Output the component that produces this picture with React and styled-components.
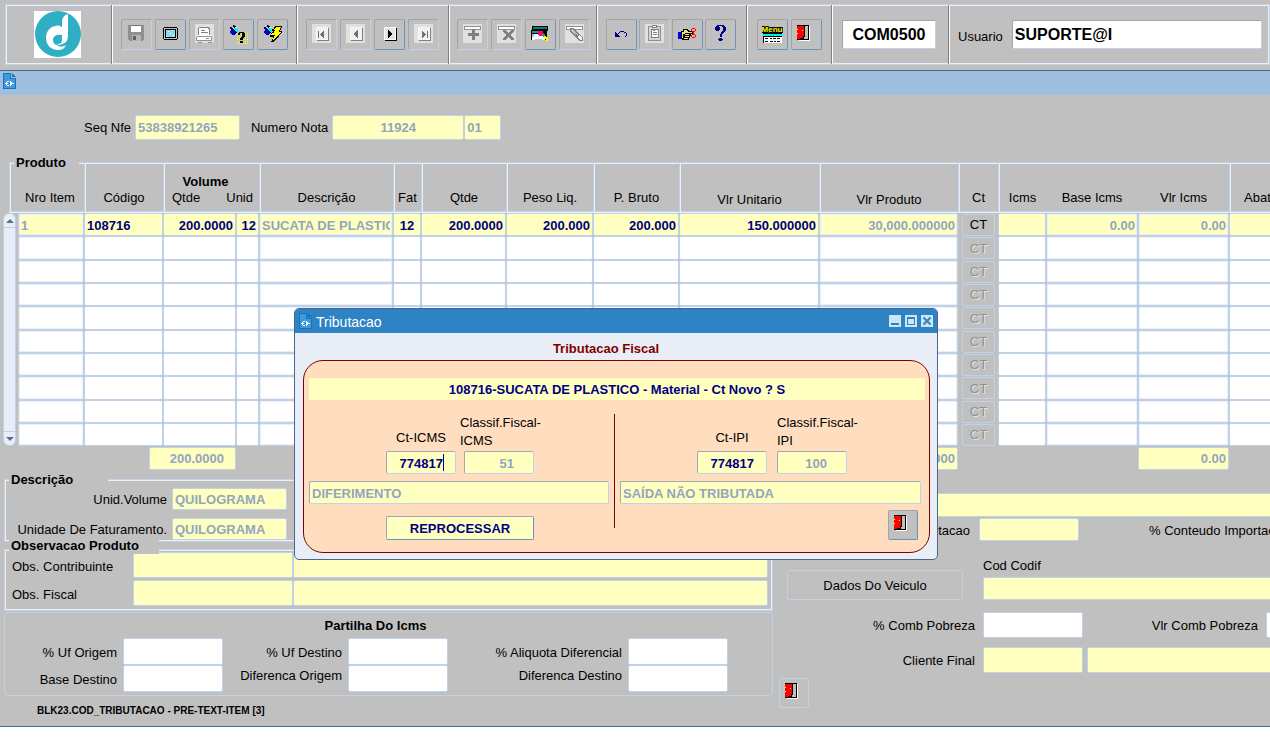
import { useState } from "react";
import styled, { createGlobalStyle, css } from "styled-components";

const GlobalStyle = createGlobalStyle`
  * {
    box-sizing: border-box;
  }
  body {
    margin: 0;
    background: #fff;
    overflow: hidden;
  }
  body, input, button {
    font-family: "Liberation Sans", Arial, sans-serif;
    font-size: 13px;
    line-height: 16px;
    color: #000;
  }
`;

/* ---------- icons ---------- */

const Icon = ({ children }) => (
  <svg width="21" height="21" viewBox="0 0 21 21" aria-hidden="true">
    {children}
  </svg>
);

const Faded = () => <rect x="1" y="0" width="19" height="19" fill="#e0e0e0" />;

const SaveIcon = () => (
  <Icon>
    <path d="M2 1h16v15h-1v1H4l-2-2z" fill="#909090" />
    <rect x="5" y="1" width="10" height="7" fill="#fff" />
    <rect x="5" y="1" width="10" height="1" fill="#707070" />
    <rect x="6" y="11" width="9" height="6" fill="#b4b4b4" />
    <rect x="7" y="12" width="3" height="4" fill="#606060" />
  </Icon>
);

const ScreenIcon = () => (
  <Icon>
    <path d="M4 3h13v1h1v11h-1v1H4v-1H3V4h1z" fill="#000" />
    <rect x="4" y="4" width="13" height="11" fill="#c0c0c0" />
    <rect x="5" y="5" width="11" height="9" fill="#000" />
    <rect x="6" y="6" width="9" height="7" fill="#70e4f4" />
    <path d="M6 6h1v1H6zM10 6h1v1h-1zM8 8h1v1H8zM12 8h1v1h-1zM6 10h1v1H6zM10 10h1v1h-1zM14 10h1v1h-1zM8 12h1v1H8zM12 12h1v1h-1z" fill="#f0b8b8" />
    <path d="M8 7h1v1H8zM12 6h1v1h-1zM10 9h1v1h-1zM6 12h1v1H6zM13 11h1v1h-1z" fill="#fff" />
  </Icon>
);

const PrinterIcon = () => (
  <Icon>
    <Faded />
    <path d="M5 3h9l2 2v7H5z" fill="#fff" />
    <path d="M4 4h1v7H4zM14 3h1v1h1v7h-1V5h-1zM5 3h9v1H5zM7 6h4v1H7zM7 8h7v1H7z" fill="#808080" />
    <path d="M3 11h15v5H3z" fill="#fff" />
    <path d="M3 12h15v1H3zM2 13h1v4H2zM17 12h1v5h-1zM3 16h15v1H3zM12 14h3v1h-3zM4 18h4v1H4zM14 18h4v1h-4z" fill="#909090" />
  </Icon>
);

const Torch = () => (
  <>
    <path d="M5 1h2v1h1v1h1v1H8v1H7V4H6V3H5z" fill="#000" />
    <rect x="6" y="1" width="1" height="1" fill="#e02020" />
    <path d="M2 3h2v1h1v1h2v1h3v2H9v1H8v1H7v1H4v-1H3V9H2V7h1V5H2z" fill="#000080" />
    <path d="M6 4h3v1h1v3H8V7H7V6H6z" fill="#00f0ff" />
    <path d="M3 7h3v1h1v2H4V9H3z" fill="#0000f0" />
    <rect x="7" y="3" width="2" height="1" fill="#fff" />
  </>
);

const Dots = () => {
  const dots = [];
  for (let y = 0; y < 6; y++) {
    for (let x = 0; x < 6; x++) {
      dots.push(<rect key={`${x}-${y}`} x={9 + x * 2} y={9 + y * 2} width="1" height="1" fill="#ffff00" />);
    }
  }
  return dots;
};

const EnterQueryIcon = () => (
  <Icon>
    <Torch />
    <Dots />
    <path d="M11 8h5v1h1v4h-1v1h-1v2h-3v-2h1v-1h1V9h-2v2h-2V9h1zM12 17h3v2h-3z" fill="#000" />
  </Icon>
);

const RunQueryIcon = () => (
  <Icon>
    <Torch />
    <path d="M13 2h7v2h-1v2h-1v1h2v2h-1v1h-1v1h-1v2h-1v1h-1v1h-1v1h-1v1h-1v1H9v-1h1v-2h1v-2H8v-2h1V9h1V8h1V7h-1V5h2V3h1z" fill="#000" />
    <path d="M14 3h5v1h-1v2h-1v2h2v1h-1v1h-1v1h-1v1h-1v1h-1v1h-1v1h-1v1h-1v-2h1v-2h1v-1H9v-1h1V9h2V7h1V6h-1V5h1V4h1z" fill="#ffff00" />
  </Icon>
);

const NavIcon = ({ shape, off }) => (
  <Icon>
    {off && <Faded />}
    <rect x="6" y="4" width="12" height="13" fill={off ? "#808080" : "#000"} />
    <rect x="5" y="3" width="12" height="13" fill={off ? "#f6f6f6" : "#fff"} />
    <rect x="6" y="4" width="10" height="11" fill={off ? "#f0f0f0" : "#e4e4e4"} />
    <path d={shape} fill={off ? "#707070" : "#000"} />
  </Icon>
);

const first = "M7 7h1v7H7zM12 7h1v7h-1v-1h-1v-1h-1v-1H9v-1h1V9h1V8h1z";
const prev = "M12 6h1v8h-1v-1h-1v-1h-1v-1H9V9h1V8h1V7h1z";
const next = "M9 6h1v1h1v1h1v1h1v2h-1v1h-1v1h-1v1H9z";
const last = "M9 7h1v1h1v1h1v1h1v1h-1v1h-1v1h-1v1H9zM14 7h1v7h-1z";

const BarTop = () => (
  <>
    <Faded />
    <rect x="2" y="2" width="17" height="4" fill="#909090" />
    <rect x="3" y="3" width="15" height="2" fill="#fff" />
  </>
);

const InsertIcon = () => (
  <Icon>
    <BarTop />
    <path d="M10 5h3v4h4v3h-4v4h-3v-4H6V9h4z" fill="#808080" />
  </Icon>
);

const DeleteIcon = () => (
  <Icon>
    <BarTop />
    <path
      d="M7 6h3v1h1v1h1v1h1V8h1V7h1V6h3v2h-1v1h-1v1h-1v2h1v1h1v1h1v2h-3v-1h-1v-1h-1v-1h-1v1h-1v1h-1v1H7v-2h1v-1h1v-1h1v-2H9V9H8V8H7z"
      fill="#808080"
    />
  </Icon>
);

const FindIcon = () => (
  <Icon>
    <rect x="2" y="2" width="16" height="5" fill="#000" />
    <rect x="3" y="3" width="14" height="2" fill="#008080" />
    <rect x="1" y="6" width="16" height="10" fill="#000" />
    <rect x="2" y="7" width="9" height="2" fill="#00a0a0" />
    <rect x="2" y="10" width="13" height="6" fill="#fff" />
    <path d="M2 10h3v1H4v2H2zM5 15h7v1H5z" fill="#c0c0c0" />
    <path d="M8 7h5v2h1v2h-2v1H9v-1H8z" fill="#ff0080" />
    <path d="M12 10h3v2h1v1h-3v-1h-1z" fill="#00c020" />
    <path d="M14 12h2v1h1v1h1v3h-2v-2h-2z" fill="#ffff00" />
    <rect x="8" y="6" width="2" height="1" fill="#800000" />
  </Icon>
);

const ClearIcon = () => (
  <Icon>
    <BarTop />
    <path d="M6 4h4v1h1v1h1v1h1v1h1v1h1v1h1v1h1v1h1v1h1v4h-4v-1h-1v-1h-1v-1h-1v-1h-1v-1h-1v-1H9v-1H8V9H7V8H6z" fill="#808080" />
    <path d="M8 5h1v1h1v1h1v1h1v1h1v1h1v1h-1v-1h-1V9h-1v1h1v1h-1v-1h-1V9H9V8H8V7H7V6h1z" fill="#c8c8c8" />
    <path d="M15 11h1v1h1v1h1v3h-2v-1h-1v-1h-1v-2h1z" fill="#f4f4f4" />
  </Icon>
);

const UndoIcon = () => (
  <Icon>
    <path d="M4 8h1v1h1v1h1V9h1V8h1V7h4v1h2v1h1v3h-1v1h-1v-1h1V9h-2V8H9v1H8v1H7v1h1v1h1v1H4z" fill="#000080" />
  </Icon>
);

const ClipboardIcon = () => (
  <Icon>
    <Faded />
    <path d="M4 2h13v15H4z" fill="#909090" />
    <path d="M5 3h11v13H5z" fill="#d4d4d4" />
    <path d="M7 5h8v9H7z" fill="#808080" />
    <path d="M8 6h6v7H8z" fill="#fff" />
    <path d="M8 1h5v3H8zM9 8h4v1H9zM9 10h4v1H9zM9 6h2v1H9z" fill="#808080" />
    <rect x="9" y="2" width="3" height="1" fill="#fff" />
  </Icon>
);

const HandIcon = () => (
  <Icon>
    <rect x="1" y="8" width="3" height="7" fill="#0000f0" />
    <path d="M4 7h2V5h5v1h1v1h4v3h-2v2h-1v2h-1v2H5v-1H4z" fill="#000" />
    <path d="M5 8h2V6h3v1h1v1h4v1H8v1H6v4H5zM8 10h4v1H8zM8 12h4v1H8zM7 14h4v1H7z" fill="#f0e070" />
    <path d="M15 4h3v1h-3zM14 5h1v2h-1zM18 5h1v2h-1zM15 7h3v1h-3zM16 8h1v2h-1zM15 10h3v1h-3zM14 11h1v2h-1zM18 11h1v2h-1zM15 13h3v1h-3z" fill="#ff0000" />
  </Icon>
);

const HelpIcon = () => (
  <Icon>
    <path
      d="M6 2h1V1h7v1h1v1h1v4h-1v1h-1v1h-1v1h-1v3h-2v-3h1V8h1V7h1V3h-1V2H9v1h1v3H9v1H6V6H5V3h1zM9 14h3v1h1v1h-1v1H9v-1H8v-1h1z"
      fill="#000080"
    />
  </Icon>
);

const MenuIcon = () => (
  <Icon>
    <rect x="1" y="9" width="19" height="10" fill="#000" />
    <rect x="1" y="10" width="19" height="2" fill="#00f0f0" />
    <rect x="2" y="13" width="18" height="6" fill="#fff" />
    <path d="M3 14h3v1H3zM8 14h2v1H8zM11 14h3v1h-3zM15 14h3v1h-3zM3 17h3v1H3zM8 17h3v1H8zM12 17h2v1h-2zM15 17h3v1h-3z" fill="#000" />
    <text x="10" y="8" textAnchor="middle" fontFamily="Liberation Sans, sans-serif" fontWeight="bold" fontSize="8" fill="#ffff00" stroke="#000" strokeWidth="2" paintOrder="stroke">
      Menu
    </text>
  </Icon>
);

const DoorIcon = () => (
  <Icon>
    <rect x="3" y="2" width="11" height="15" fill="#fff" />
    <rect x="1" y="1" width="12" height="15" fill="#000" />
    <rect x="8" y="2" width="4" height="13" fill="#c0c0c0" />
    <path d="M1 2h7v10H7v2H4v1H1z" fill="#ff0000" />
    <path d="M8 2h1v11H8zM7 12h1v2H7zM4 14h3v1H4z" fill="#000" />
    <path d="M1 5h1v1H1zM1 9h1v1H1zM6 6h1v1H6z" fill="#ffff00" />
  </Icon>
);

const PageIcon = () => (
  <svg width="13" height="16" viewBox="0 0 13 16" aria-hidden="true">
    <path d="M0 0h8v5h5v11H0z" fill="#1c71ae" />
    <path d="M1 1h6v5h5v9H1z" fill="#3c9ade" />
    <path d="M9 0l4 4H9z" fill="#1c71ae" />
    <path d="M4 8h2v1H4zM3 9h1v1H3zM2 10h3v1H2zM3 11h1v1H3zM4 12h2v1H4zM7 8h1v1h1v1h2v1H9v1H8v1H7z" fill="#fff" />
  </svg>
);

const LogoMark = () => (
  <svg width="47" height="47" viewBox="0 0 47 47" role="img" aria-label="Logo">
    <rect width="47" height="47" fill="#fff" />
    <circle cx="24" cy="23" r="23" fill="#2fafc4" />
    <path
      d="M34 3c-4 1-6 4-6 8v5c-2-1-4-2-6-1-6 0-10 6-10 12 0 7 5 12 12 12 4 0 7-2 8-5-3 2-7 2-9 0 4 0 7-1 9-3 2-3 2-5 2-8z"
      fill="#fff"
    />
    <path d="M28 24c-5-1-9 1-9 5 0 3 2 5 5 5-2-2-2-5 0-6 1-1 3 0 3 1 1-1 1-3 1-5z" fill="#2fafc4" />
    <circle cx="24" cy="29" r="4" fill="#2fafc4" />
  </svg>
);

/* ---------- data ---------- */

const toolGroups = [
  {
    width: 185,
    pad: 9,
    gap: 3,
    tools: [
      { name: "Salvar", icon: <SaveIcon />, off: true },
      { name: "Tela", icon: <ScreenIcon /> },
      { name: "Imprimir", icon: <PrinterIcon />, off: true },
      { name: "Entrar consulta", icon: <EnterQueryIcon /> },
      { name: "Executar consulta", icon: <RunQueryIcon /> },
    ],
  },
  {
    width: 152,
    pad: 9,
    gap: 3,
    tools: [
      { name: "Primeiro", icon: <NavIcon shape={first} off />, off: true },
      { name: "Anterior", icon: <NavIcon shape={prev} off />, off: true },
      { name: "Proximo", icon: <NavIcon shape={next} /> },
      { name: "Ultimo", icon: <NavIcon shape={last} off />, off: true },
    ],
  },
  {
    width: 148,
    pad: 8,
    gap: 3,
    tools: [
      { name: "Inserir", icon: <InsertIcon />, off: true },
      { name: "Excluir", icon: <DeleteIcon />, off: true },
      { name: "Localizar", icon: <FindIcon /> },
      { name: "Limpar", icon: <ClearIcon />, off: true },
    ],
  },
  {
    width: 150,
    pad: 9,
    gap: 2,
    tools: [
      { name: "Desfazer", icon: <UndoIcon /> },
      { name: "Colar", icon: <ClipboardIcon />, off: true },
      { name: "Editar", icon: <HandIcon /> },
      { name: "Ajuda", icon: <HelpIcon /> },
    ],
  },
  {
    width: 85,
    pad: 10,
    gap: 3,
    tools: [
      { name: "Menu", icon: <MenuIcon /> },
      { name: "Sair", icon: <DoorIcon /> },
    ],
  },
];

const columns = [
  { name: "Nro Item", width: 66, value: "1", dim: true },
  { name: "Código", width: 79, value: "108716" },
  { name: "Volume Qtde", width: 73, value: "200.0000", align: "right" },
  { name: "Unid", width: 23, value: "12", align: "right" },
  { name: "Descrição", width: 134, value: "SUCATA DE PLASTICO", dim: true },
  { name: "Fat", width: 28, value: "12", align: "center" },
  { name: "Qtde", width: 85, value: "200.0000", align: "right" },
  { name: "Peso Liq.", width: 87, value: "200.000", align: "right" },
  { name: "P. Bruto", width: 86, value: "200.000", align: "right" },
  { name: "Vlr Unitario", width: 140, value: "150.000000", align: "right", low: true },
  { name: "Vlr Produto", width: 139, value: "30,000.000000", align: "right", dim: true, low: true },
  { name: "Ct", width: 40, button: true },
  { name: "Icms", width: 48, value: "" },
  { name: "Base Icms", width: 92, value: "0.00", align: "right", dim: true, plain: true },
  { name: "Vlr Icms", width: 91, value: "0.00", align: "right", dim: true, plain: true },
  { name: "Abat", value: "", left: true },
];

const rows = Array.from({ length: 10 }, (_, i) => i);

/* ---------- components ---------- */

const Toolbar = () => (
  <Bar>
    <BarFrame>
      <LogoCell>
        <LogoMark />
      </LogoCell>
      {toolGroups.map((group) => (
        <ToolGroup key={group.tools[0].name} $width={group.width} $pad={group.pad} $gap={group.gap}>
          {group.tools.map((tool) => (
            <ToolButton key={tool.name} type="button" aria-label={tool.name} disabled={tool.off}>
              {tool.icon}
            </ToolButton>
          ))}
        </ToolGroup>
      ))}
      <CodeCell>
        <BarInput aria-label="Programa" defaultValue="COM0500" $align="center" />
      </CodeCell>
      <UserCell>
        <UserLabel htmlFor="usuario">Usuario</UserLabel>
        <BarInput id="usuario" defaultValue="SUPORTE@I" />
      </UserCell>
    </BarFrame>
  </Bar>
);

const ItemsTable = () => (
  <TableWrap>
    <Table>
      <colgroup>
        <Col $width={15} />
        {columns.map((c) => (
          <Col key={c.name} $width={c.width} />
        ))}
      </colgroup>
      <thead>
        <tr>
          <CornerHead colSpan={2}>
            <CornerFrame>
              <Legend $gap={13}>Produto</Legend>
              Nro Item
            </CornerFrame>
          </CornerHead>
          <Head>Código</Head>
          <Head colSpan={2}>
            <VolumeTitle>Volume</VolumeTitle>
            <VolumeParts>
              <span>Qtde</span>
              <span>Unid</span>
            </VolumeParts>
          </Head>
          {columns.slice(4).map((c) => (
            <Head key={c.name} $low={c.low} $plain={c.plain} $left={c.left}>
              {c.name}
            </Head>
          ))}
        </tr>
      </thead>
      <tbody>
        {rows.map((row) => (
          <tr key={row}>
            {row === 0 && (
              <ScrollCell rowSpan={10}>
                <Scroll>
                  <ScrollButton type="button" aria-label="Subir">
                    <svg width="8" height="4" viewBox="0 0 8 4">
                      <path d="M0 4l4-4 4 4z" fill="#60708a" />
                    </svg>
                  </ScrollButton>
                  <ScrollButton type="button" aria-label="Descer">
                    <svg width="8" height="4" viewBox="0 0 8 4">
                      <path d="M0 0h8L4 4z" fill="#60708a" />
                    </svg>
                  </ScrollButton>
                </Scroll>
              </ScrollCell>
            )}
            {columns.map((c) =>
              c.button ? (
                <CtCell key={c.name}>
                  <CtButton type="button" disabled={row > 0}>
                    CT
                  </CtButton>
                </CtCell>
              ) : (
                <Cell key={c.name}>
                  <CellInput
                    aria-label={`${c.name} ${row + 1}`}
                    defaultValue={row === 0 ? c.value : ""}
                    $fill={row === 0 ? "#ffffc0" : "#fff"}
                    $align={c.align}
                    $dim={c.dim}
                  />
                </Cell>
              )
            )}
          </tr>
        ))}
      </tbody>
      <tfoot>
        <tr>
          <TotalCell colSpan={4}>
            <Input aria-label="Total volume" defaultValue="200.0000" $width={87} $height={23} $align="right" $pad={11} $dim readOnly />
          </TotalCell>
          <TotalCell colSpan={8}>
            <Input aria-label="Total produto" defaultValue="30,000.000000" $width={139} $height={23} $align="right" $dim readOnly />
          </TotalCell>
          <TotalCell colSpan={3} />
          <TotalCell>
            <Input aria-label="Total Icms" defaultValue="0.00" $width={91} $height={23} $align="right" $dim readOnly />
          </TotalCell>
          <TotalCell />
        </tr>
      </tfoot>
    </Table>
  </TableWrap>
);

const Details = () => (
  <LeftColumn>
    <Panel $top={8} $bottom={1} $gap={8}>
      <Legend $gap={35}>Descrição</Legend>
      <Line $gap={5}>
        <Label htmlFor="unidvol" $width={162}>
          Unid.Volume
        </Label>
        <Input id="unidvol" defaultValue="QUILOGRAMA" $width={115} $height={22} $dim readOnly />
      </Line>
      <Line $gap={5}>
        <Label htmlFor="unidfat" $width={162}>
          Unidade De Faturamento.
        </Label>
        <Input id="unidfat" defaultValue="QUILOGRAMA" $width={115} $height={22} $dim readOnly />
      </Line>
    </Panel>
    <ObsPanel $top={2} $bottom={4} $gap={2}>
      <Legend $gap={20} $high>
        Observacao Produto
      </Legend>
      <Line>
        <ObsLabel htmlFor="obscontr">Obs. Contribuinte</ObsLabel>
        <Input id="obscontr" $width={160} $height={26} />
        <Input aria-label="Texto contribuinte" $height={26} />
      </Line>
      <Line>
        <ObsLabel htmlFor="obsfiscal">Obs. Fiscal</ObsLabel>
        <Input id="obsfiscal" $width={160} $height={26} />
        <Input aria-label="Texto fiscal" $height={26} />
      </Line>
    </ObsPanel>
    <RoundPanel>
      <PanelTitle>Partilha Do Icms</PanelTitle>
      <ShareGrid>
        <Label htmlFor="uforigem">% Uf Origem</Label>
        <Input id="uforigem" $width={100} $height={27} $fill="#fff" />
        <Label htmlFor="ufdestino">% Uf Destino</Label>
        <Input id="ufdestino" $width={100} $height={27} $fill="#fff" />
        <Label htmlFor="aliquota">% Aliquota Diferencial</Label>
        <Input id="aliquota" $width={100} $height={27} $fill="#fff" />
        <Label htmlFor="basedest">Base Destino</Label>
        <Input id="basedest" $width={100} $height={27} $fill="#fff" />
        <RaisedLabel htmlFor="diforigem">Diferenca Origem</RaisedLabel>
        <Input id="diforigem" $width={100} $height={27} $fill="#fff" />
        <RaisedLabel htmlFor="difdestino">Diferenca Destino</RaisedLabel>
        <Input id="difdestino" $width={100} $height={27} $fill="#fff" />
      </ShareGrid>
    </RoundPanel>
    <Status>BLK23.COD_TRIBUTACAO - PRE-TEXT-ITEM [3]</Status>
  </LeftColumn>
);

const SideFields = () => (
  <RightColumn>
    <Input aria-label="Natureza" $height={24} />
    <Line $gap={9} $after={16}>
      <Label htmlFor="importacao" $width={191}>
        % Importacao
      </Label>
      <Input id="importacao" $width={100} $height={23} />
      <ContentLabel>% Conteudo Importac</ContentLabel>
    </Line>
    <Line $gap={8} $after={12}>
      <VehicleCell>
        <VehicleButton type="button">Dados Do Veiculo</VehicleButton>
      </VehicleCell>
      <CodifField>
        <label htmlFor="codif">Cod Codif</label>
        <Input id="codif" $height={23} />
      </CodifField>
    </Line>
    <Line $gap={8} $after={9}>
      <Label htmlFor="combpobreza" $width={196}>
        % Comb Pobreza
      </Label>
      <Input id="combpobreza" $width={100} $height={26} $fill="#fff" />
      <Label htmlFor="vlrcomb" $width={167}>
        Vlr Comb Pobreza
      </Label>
      <Input id="vlrcomb" $height={26} $fill="#fff" />
    </Line>
    <Line $gap={8} $after={5}>
      <Label htmlFor="cliente" $width={196}>
        Cliente Final
      </Label>
      <ClientFields>
        <Input id="cliente" $width={100} $height={26} />
        <Input aria-label="Nome cliente" $height={26} />
      </ClientFields>
    </Line>
    <SquareButton type="button" aria-label="Sair" $flat>
      <DoorIcon />
    </SquareButton>
  </RightColumn>
);

const TaxDialog = ({ onClose }) => (
  <Dialog role="dialog" aria-label="Tributacao">
    <DialogBar>
      <PageIcon />
      <DialogName>Tributacao</DialogName>
      <WinButton type="button" aria-label="Minimizar">
        <svg width="12" height="12" viewBox="0 0 12 12">
          <path d="M2 8h8v2H2z" fill="#2d83c4" />
        </svg>
      </WinButton>
      <WinButton type="button" aria-label="Maximizar">
        <svg width="12" height="12" viewBox="0 0 12 12">
          <path d="M2 2h8v8H2zM3 4v5h6V4z" fillRule="evenodd" fill="#2d83c4" />
        </svg>
      </WinButton>
      <WinButton type="button" aria-label="Fechar" onClick={onClose}>
        <svg width="12" height="12" viewBox="0 0 12 12">
          <path d="M2.500 2.500l7 7M9.500 2.500l-7 7" stroke="#2d83c4" strokeWidth="2" />
        </svg>
      </WinButton>
    </DialogBar>
    <DialogTitle>Tributacao Fiscal</DialogTitle>
    <Card>
      <Band>108716-SUCATA DE PLASTICO - Material - Ct Novo ? S</Band>
      <Halves>
        <Half>
          <TaxFields $gap={4}>
            <TaxField $width={70} $center>
              <label htmlFor="cticms">Ct-ICMS</label>
              <TaxInput id="cticms" defaultValue="774817" $width={70} $align="right" $pad={12} />
              <Caret />
            </TaxField>
            <TaxField $width={74}>
              <label htmlFor="classicms">
                Classif.Fiscal-
                <br />
                ICMS
              </label>
              <TaxInput id="classicms" defaultValue="51" $width={70} $align="right" $pad={19} $dim readOnly />
            </TaxField>
          </TaxFields>
          <TaxInput aria-label="Descricao ICMS" defaultValue="DIFERIMENTO" $dim readOnly />
          <Reprocess type="button">REPROCESSAR</Reprocess>
        </Half>
        <Divider />
        <Half>
          <TaxFields $gap={10}>
            <TaxField $width={70} $center>
              <label htmlFor="ctipi">Ct-IPI</label>
              <TaxInput id="ctipi" defaultValue="774817" $width={70} $align="right" $pad={12} />
            </TaxField>
            <TaxField $width={70}>
              <label htmlFor="classipi">
                Classif.Fiscal-
                <br />
                IPI
              </label>
              <TaxInput id="classipi" defaultValue="100" $width={70} $align="right" $pad={19} $dim readOnly />
            </TaxField>
          </TaxFields>
          <TaxInput aria-label="Descricao IPI" defaultValue="SAÍDA NÃO TRIBUTADA" $dim readOnly />
          <ExitLine>
            <SquareButton type="button" aria-label="Sair" onClick={onClose}>
              <DoorIcon />
            </SquareButton>
          </ExitLine>
        </Half>
      </Halves>
    </Card>
  </Dialog>
);

const App = () => {
  const [open, setOpen] = useState(true);

  return (
    <>
      <GlobalStyle />
      <Toolbar />
      <Window>
        <WindowBar>
          <PageIcon />
        </WindowBar>
        <Body>
          <NoteLine>
            <NoteField>
              <label htmlFor="seqnfe">Seq Nfe</label>
              <Input id="seqnfe" defaultValue="53838921265" $width={105} $height={25} $dim readOnly />
            </NoteField>
            <NoteField>
              <label htmlFor="nota">Numero Nota</label>
              <div>
                <Input id="nota" defaultValue="11924" $width={132} $height={25} $align="center" $dim readOnly />
                <Input aria-label="Serie" defaultValue="01" $width={37} $height={25} $dim readOnly />
              </div>
            </NoteField>
          </NoteLine>
          <ItemsTable />
          <Lower>
            <Details />
            <SideFields />
          </Lower>
        </Body>
        {open && <TaxDialog onClose={() => setOpen(false)} />}
      </Window>
    </>
  );
};
export default App;

/* ---------- styles ---------- */

const edge = "#bfd2e8";
const shine = "#e9f0f8";

const frame = css`
  border: 1px solid ${edge};
  box-shadow: inset 1px 1px 0 ${shine}, inset -1px -1px 0 ${shine};
`;

const Bar = styled.header`
  background: #c0c0c0;
  padding: 4px 0 5px 5px;
`;
const BarFrame = styled.div`
  ${frame}
  display: flex;
  height: 61px;
`;
const BarCell = styled.div`
  flex: none;
  display: flex;
  align-items: center;
  border-right: 1px solid #808080;
  box-shadow: 1px 0 0 #fff;
`;
const LogoCell = styled(BarCell)`
  width: 106px;
  padding-left: 28px;
`;
const ToolGroup = styled(BarCell)`
  gap: ${(p) => p.$gap}px;
  width: ${(p) => p.$width}px;
  padding-left: ${(p) => p.$pad}px;
`;
const ToolButton = styled.button`
  flex: none;
  display: flex;
  align-items: center;
  justify-content: center;
  width: 31px;
  height: 31px;
  padding: 0;
  background: #c0c0c0;
  border: 1px solid;
  border-color: #a4a4a4 #6f93b8 #6f93b8 #a4a4a4;
  border-radius: 2px;

  &:disabled {
    border-color: #a4a4a4 ${edge} ${edge} #a4a4a4;
  }
`;
const CodeCell = styled(BarCell)`
  width: 117px;
  padding: 0 12px 0 10px;
`;
const UserCell = styled.div`
  flex: 1;
  display: flex;
  align-items: center;
  gap: 9px;
  padding: 0 7px 0 9px;
`;
const UserLabel = styled.label`
  padding-top: 4px;
`;
const BarInput = styled.input`
  flex: 1;
  min-width: 0;
  height: 29px;
  padding: 0 2px;
  border: 1px solid;
  border-color: #a4a4a4 ${edge} ${edge} #a4a4a4;
  border-radius: 2px;
  background: #fff;
  font-size: 16px;
  font-weight: bold;
  text-align: ${(p) => p.$align || "left"};
  outline: none;
`;

const Window = styled.main`
  position: relative;
  background: #c0c0c0;
  border-top: 1px solid #4a6592;
  border-bottom: 1px solid #4a6592;
  overflow: hidden;
`;
const WindowBar = styled.div`
  display: flex;
  align-items: flex-start;
  height: 24px;
  padding: 2px 3px;
  background: #9ebfdf;
`;
const Body = styled.div`
  padding: 20px 0 7px;
`;

const Input = styled.input`
  flex: ${(p) => (p.$width ? "none" : "1 1 0")};
  width: ${(p) => (p.$width ? `${p.$width}px` : "100%")};
  min-width: 0;
  height: ${(p) => p.$height}px;
  padding: 0 ${(p) => p.$pad || 2}px 0 2px;
  border: 1px solid ${edge};
  border-radius: 2px;
  background: ${(p) => p.$fill || "#ffffc0"};
  color: ${(p) => (p.$dim ? "#92a6be" : "#000080")};
  font-weight: bold;
  text-align: ${(p) => p.$align || "left"};
  outline: none;
`;
const CellInput = styled(Input)`
  display: block;
  height: 23px;
  padding-top: 2px;
  box-shadow: ${(p) => (p.$dim ? `inset 0 0 0 1px ${shine}` : "none")};
`;

const NoteLine = styled.div`
  display: flex;
  gap: 11px;
  padding-left: 84px;
  margin-bottom: 22px;
`;
const NoteField = styled.div`
  display: flex;
  align-items: center;
  gap: 4px;

  div {
    display: flex;
  }
`;

const Legend = styled.h2`
  position: absolute;
  top: ${(p) => (p.$high ? -12 : -8)}px;
  left: 4px;
  margin: 0;
  padding: 0 ${(p) => p.$gap}px 0 2px;
  background: #c0c0c0;
  font-size: 13px;
  line-height: 16px;
  font-weight: bold;
`;

const TableWrap = styled.div`
  margin: 0 -8px 0 3px;
`;
const Table = styled.table`
  width: 100%;
  min-width: 1260px;
  table-layout: fixed;
  border-spacing: 0;

  tbody tr:nth-child(3n + 2) input {
    height: 24px;
  }
`;
const Col = styled.col`
  width: ${(p) => (p.$width ? `${p.$width}px` : "auto")};
`;
const Head = styled.th`
  height: 51px;
  padding: 0 0 ${(p) => (p.$low ? 4 : 6)}px ${(p) => (p.$left ? 14 : 0)}px;
  border-top: 1px solid ${edge};
  border-bottom: 1px solid ${shine};
  border-left: ${(p) => (p.$plain ? "none" : `1px solid ${edge}`)};
  box-shadow: inset ${(p) => (p.$plain ? 0 : 1)}px 1px 0 ${shine}, inset 0 -1px 0 ${edge};
  font-weight: normal;
  text-align: ${(p) => (p.$left ? "left" : "center")};
  vertical-align: bottom;
  white-space: nowrap;
`;
const CornerHead = styled.th`
  padding: 0 0 0 6px;
  font-weight: normal;
`;
const CornerFrame = styled.div`
  position: relative;
  height: 51px;
  padding: 27px 0 0 6px;
  border-top: 1px solid ${edge};
  border-bottom: 1px solid ${shine};
  border-left: 1px solid ${edge};
  box-shadow: inset 1px 1px 0 ${shine}, inset 0 -1px 0 ${edge};
`;
const VolumeTitle = styled.div`
  padding-right: 12px;
  font-weight: bold;
`;
const VolumeParts = styled.div`
  display: flex;
  justify-content: space-between;
  padding: 0 6px 0 8px;
`;
const Cell = styled.td`
  padding: 0;
`;
const ScrollCell = styled.td`
  height: 233px;
  padding: 0 2px 0 0;
`;
const Scroll = styled.div`
  display: flex;
  flex-direction: column;
  justify-content: space-between;
  height: 233px;
  background: #e9eef6;
  border: 1px solid ${edge};
  border-radius: 6px;
`;
const ScrollButton = styled.button`
  display: flex;
  align-items: center;
  justify-content: center;
  height: 14px;
  padding: 0;
  border: 0 solid ${edge};
  border-bottom-width: 1px;
  background: none;

  &:last-child {
    border-width: 1px 0 0;
  }
`;
const CtCell = styled.td`
  padding: 0 3px 0 4px;
`;
const CtButton = styled.button`
  display: block;
  width: 100%;
  height: 22px;
  padding: 1px 0 0;
  border: 1px solid ${edge};
  border-radius: 2px;
  background: #c0c0c0;

  &:disabled {
    color: #909090;
    text-shadow: 1px 1px 0 #e4e4e4;
  }
`;
const TotalCell = styled.td`
  height: 24px;
  padding: 1px 0 0;
  text-align: right;

  input {
    display: inline-block;
    vertical-align: top;
  }
`;

const Lower = styled.div`
  display: grid;
  grid-template-columns: 769px 1fr;
  gap: 6px;
  padding: 9px 0 0 4px;
`;
const LeftColumn = styled.section`
  min-width: 0;
`;
const Panel = styled.div`
  ${frame}
  position: relative;
  display: flex;
  flex-direction: column;
  gap: ${(p) => p.$gap}px;
  padding: ${(p) => p.$top}px 4px ${(p) => p.$bottom}px 0;
`;
const ObsPanel = styled(Panel)`
  margin-top: 7px;
`;
const Line = styled.div`
  display: flex;
  align-items: center;
  gap: ${(p) => p.$gap || 0}px;
  margin-bottom: ${(p) => p.$after || 0}px;
`;
const Label = styled.label`
  flex: none;
  width: ${(p) => (p.$width ? `${p.$width}px` : "auto")};
  padding-top: 2px;
  text-align: right;
  white-space: nowrap;
`;
const RaisedLabel = styled(Label)`
  padding: 0 0 6px;
`;
const ObsLabel = styled.label`
  flex: none;
  width: 128px;
  padding: 4px 0 0 7px;
`;
const RoundPanel = styled.div`
  margin-top: 1px;
  padding: 0 26px 3px 0;
  border: 1px solid ${edge};
  border-radius: 4px;
`;
const PanelTitle = styled.h2`
  margin: 0;
  font-size: 13px;
  line-height: 25px;
  text-align: center;
`;
const ShareGrid = styled.div`
  display: grid;
  grid-template-columns: 112px 100px 113px 100px 168px 100px;
  column-gap: 6px;
  align-items: center;
`;
const Status = styled.p`
  margin: 7px 0 0 33px;
  font-size: 10px;
  font-weight: bold;
`;

const RightColumn = styled.section`
  min-width: 0;
  margin-right: -8px;
  padding-top: 14px;

  > input {
    display: block;
    margin-bottom: 1px;
  }
`;
const ContentLabel = styled.span`
  padding: 2px 0 0 61px;
  white-space: nowrap;
`;
const VehicleCell = styled.div`
  flex: none;
  align-self: flex-end;
  width: 196px;
  padding: 0 12px 0 8px;
`;
const VehicleButton = styled.button`
  display: block;
  width: 100%;
  height: 30px;
  padding: 1px 0 0;
  border: 1px solid ${edge};
  border-radius: 2px;
  background: #c0c0c0;
`;
const CodifField = styled.div`
  flex: 1;
  display: flex;
  flex-direction: column;
  gap: 3px;

  label {
    padding-top: 1px;
  }
  input {
    flex: none;
  }
`;
const ClientFields = styled.div`
  flex: 1;
  display: flex;
  gap: 4px;
`;
const SquareButton = styled(ToolButton)`
  width: 30px;
  height: 30px;
  padding: 0 0 1px 1px;
  ${(p) => p.$flat && `border-color: ${edge};`}
`;

const Dialog = styled.section`
  position: absolute;
  top: 237px;
  left: 294px;
  width: 644px;
  border: 1px solid #4a6592;
  border-radius: 5px;
  background: #e9eef6;
  overflow: hidden;
`;
const DialogBar = styled.div`
  display: flex;
  align-items: center;
  gap: 4px;
  height: 24px;
  padding: 0 4px;
  background: #2d83c4;
`;
const DialogName = styled.span`
  flex: 1;
  padding-top: 2px;
  color: #fff;
  font-size: 14px;
`;
const WinButton = styled.button`
  display: flex;
  width: 12px;
  height: 12px;
  padding: 0;
  border: 0;
  background: #cfe4f5;
`;
const DialogTitle = styled.h1`
  margin: 8px 20px 3px 0;
  color: #800000;
  font-size: 13px;
  line-height: 16px;
  text-align: center;
`;
const Card = styled.div`
  margin: 0 7px 6px 8px;
  padding: 17px 4px 12px 5px;
  border: 1px solid #800000;
  border-radius: 20px;
  background: #ffdec0;
`;
const Band = styled.div`
  padding-top: 2px;
  background: #ffffc0;
  color: #000080;
  font-weight: bold;
  line-height: 20px;
  text-align: center;
`;
const Halves = styled.div`
  display: grid;
  grid-template-columns: 300px 1px 301px;
  column-gap: 5px;
  padding-top: 14px;
`;
const Half = styled.div`
  display: flex;
  flex-direction: column;
`;
const Divider = styled.div`
  height: 114px;
  background: #800000;
`;
const TaxFields = styled.div`
  display: flex;
  align-items: flex-end;
  gap: ${(p) => p.$gap}px;
  padding-left: 77px;
  margin-bottom: 7px;
`;
const TaxField = styled.div`
  position: relative;
  display: flex;
  flex-direction: column;
  gap: 1px;
  width: ${(p) => p.$width}px;
  align-items: flex-end;

  label {
    width: 100%;
    line-height: 18px;
    padding-bottom: ${(p) => (p.$center ? 3 : 0)}px;
    text-align: ${(p) => (p.$center ? "center" : "left")};
    white-space: nowrap;
  }
`;
const TaxInput = styled(Input)`
  flex: none;
  height: 23px;
  padding-top: 2px;
  border-color: #a0a8b4 ${edge} ${edge} #a0a8b4;
`;
const Caret = styled.span`
  position: absolute;
  right: 12px;
  bottom: 3px;
  width: 1px;
  height: 17px;
  background: #000080;
`;
const Reprocess = styled.button`
  width: 148px;
  height: 24px;
  margin: 12px 0 0 77px;
  padding: 1px 0 0;
  border: 1px solid;
  border-color: #a0a8b4 #6f93b8 #6f93b8 #a0a8b4;
  border-radius: 2px;
  background: #ffffc0;
  color: #000080;
  font-weight: bold;
`;
const ExitLine = styled.div`
  display: flex;
  justify-content: flex-end;
  padding: 6px 3px 0 0;
`;
